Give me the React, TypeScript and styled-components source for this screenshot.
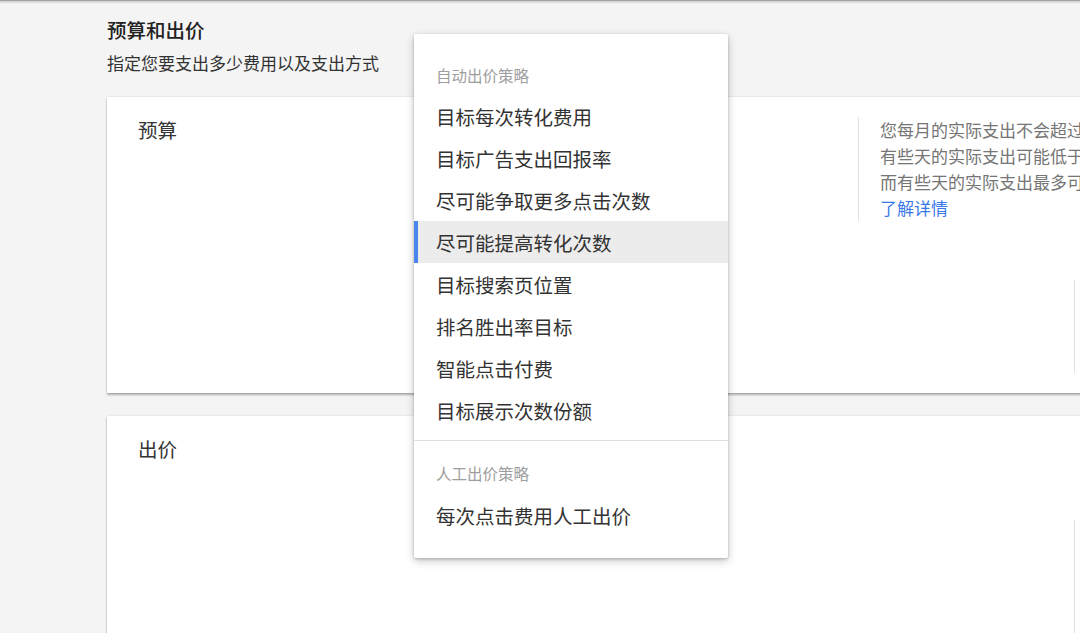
import React from 'react'
import styled, { createGlobalStyle } from 'styled-components'

const GlobalStyle = createGlobalStyle`
  html, body {
    margin: 0;
    padding: 0;
    background: #f4f4f4;
    font-family: "Noto Sans CJK SC", "Noto Sans", sans-serif;
    color: #333;
  }
`

const Page = styled.div`
  position: relative;
  width: 1080px;
  height: 633px;
  overflow: hidden;
  background: #f4f4f4;
`

const TopShade = styled.div`
  height: 4px;
  background: linear-gradient(#8c8c8c, #d6d6d6 40%, #f4f4f4);
`

const Content = styled.div`
  padding: 12px 0 0 107px;
`

const SectionTitle = styled.h1`
  margin: 0;
  font-size: 19.5px;
  line-height: 28px;
  font-weight: 500;
  color: #222;
`

const SectionSub = styled.p`
  margin: 7px 0 22px;
  font-size: 17px;
  line-height: 24px;
  color: #333;
`

const Card = styled.section<{ $gapAfter?: number }>`
  width: 1100px;
  box-sizing: border-box;
  background: #fff;
  padding: 20px 0 20px 31px;
  margin-bottom: ${(p) => p.$gapAfter ?? 0}px;
  box-shadow: 0 2px 2px rgba(0, 0, 0, 0.28), 0 0 2px rgba(0, 0, 0, 0.12);
  display: grid;
  grid-template-columns: 720px 216px 1fr;
  grid-template-rows: auto auto;
`

const CardTitle = styled.h2`
  grid-column: 1;
  grid-row: 1;
  margin: 0;
  font-size: 19.5px;
  line-height: 26px;
  font-weight: 400;
  color: #333;
`

const Help = styled.div`
  grid-column: 2;
  grid-row: 1;
  border-left: 1px solid #e0e0e0;
  padding-left: 21px;
  font-size: 17px;
  line-height: 26px;
  color: #757575;
  white-space: nowrap;
`

const HelpLink = styled.a`
  color: #3b78e7;
  text-decoration: none;
`

const SideRule = styled.div<{ $top: number; $height: number }>`
  grid-column: 3;
  grid-row: 2;
  margin-top: ${(p) => p.$top}px;
  height: ${(p) => p.$height}px;
  border-left: 1px solid #e0e0e0;
`

const Menu = styled.div`
  position: absolute;
  left: 414px;
  top: 34px;
  width: 314px;
  padding: 7px 0 22px;
  background: #fff;
  border-radius: 2px;
  box-shadow: 0 3px 8px rgba(0, 0, 0, 0.22), 0 1px 3px rgba(0, 0, 0, 0.2);
`

const MenuHeader = styled.div<{ $top: number; $bottom: number }>`
  padding: ${(p) => p.$top}px 22px ${(p) => p.$bottom}px;
  font-size: 15.5px;
  line-height: 20px;
  color: #9e9e9e;
`

const MenuItem = styled.div<{ $active?: boolean }>`
  position: relative;
  height: 42px;
  padding-left: 22px;
  display: flex;
  align-items: center;
  font-size: 19.5px;
  color: #333;
  background: ${(p) => (p.$active ? '#ececec' : 'transparent')};

  &::before {
    content: '';
    position: absolute;
    left: 0;
    top: 0;
    bottom: 0;
    width: 4px;
    background: ${(p) => (p.$active ? '#4a86f0' : 'transparent')};
  }
`

const MenuDivider = styled.div`
  height: 1px;
  margin-top: 9px;
  background: #e0e0e0;
`

const autoItems = [
  '目标每次转化费用',
  '目标广告支出回报率',
  '尽可能争取更多点击次数',
  '尽可能提高转化次数',
  '目标搜索页位置',
  '排名胜出率目标',
  '智能点击付费',
  '目标展示次数份额',
]

export default function App() {
  return (
    <Page>
      <GlobalStyle />
      <TopShade />
      <Content>
        <SectionTitle>预算和出价</SectionTitle>
        <SectionSub>指定您要支出多少费用以及支出方式</SectionSub>

        <Card $gapAfter={23}>
          <CardTitle>预算</CardTitle>
          <Help>
            您每月的实际支出不会超过每日平均预算与一个月平均天数的乘积。
            <br />
            有些天的实际支出可能低于每日平均预算，
            <br />
            而有些天的实际支出最多可达每日平均预算的两倍。
            <br />
            <HelpLink href="#">了解详情</HelpLink>
          </Help>
          <SideRule $top={59} $height={93} />
        </Card>

        <Card>
          <CardTitle>出价</CardTitle>
          <SideRule $top={58} $height={200} />
        </Card>
      </Content>

      <Menu>
        <MenuHeader $top={24} $bottom={10}>自动出价策略</MenuHeader>
        {autoItems.map((label) => (
          <MenuItem key={label} $active={label === '尽可能提高转化次数'}>
            {label}
          </MenuItem>
        ))}
        <MenuDivider />
        <MenuHeader $top={22} $bottom={11}>人工出价策略</MenuHeader>
        <MenuItem>每次点击费用人工出价</MenuItem>
      </Menu>
    </Page>
  )
}
